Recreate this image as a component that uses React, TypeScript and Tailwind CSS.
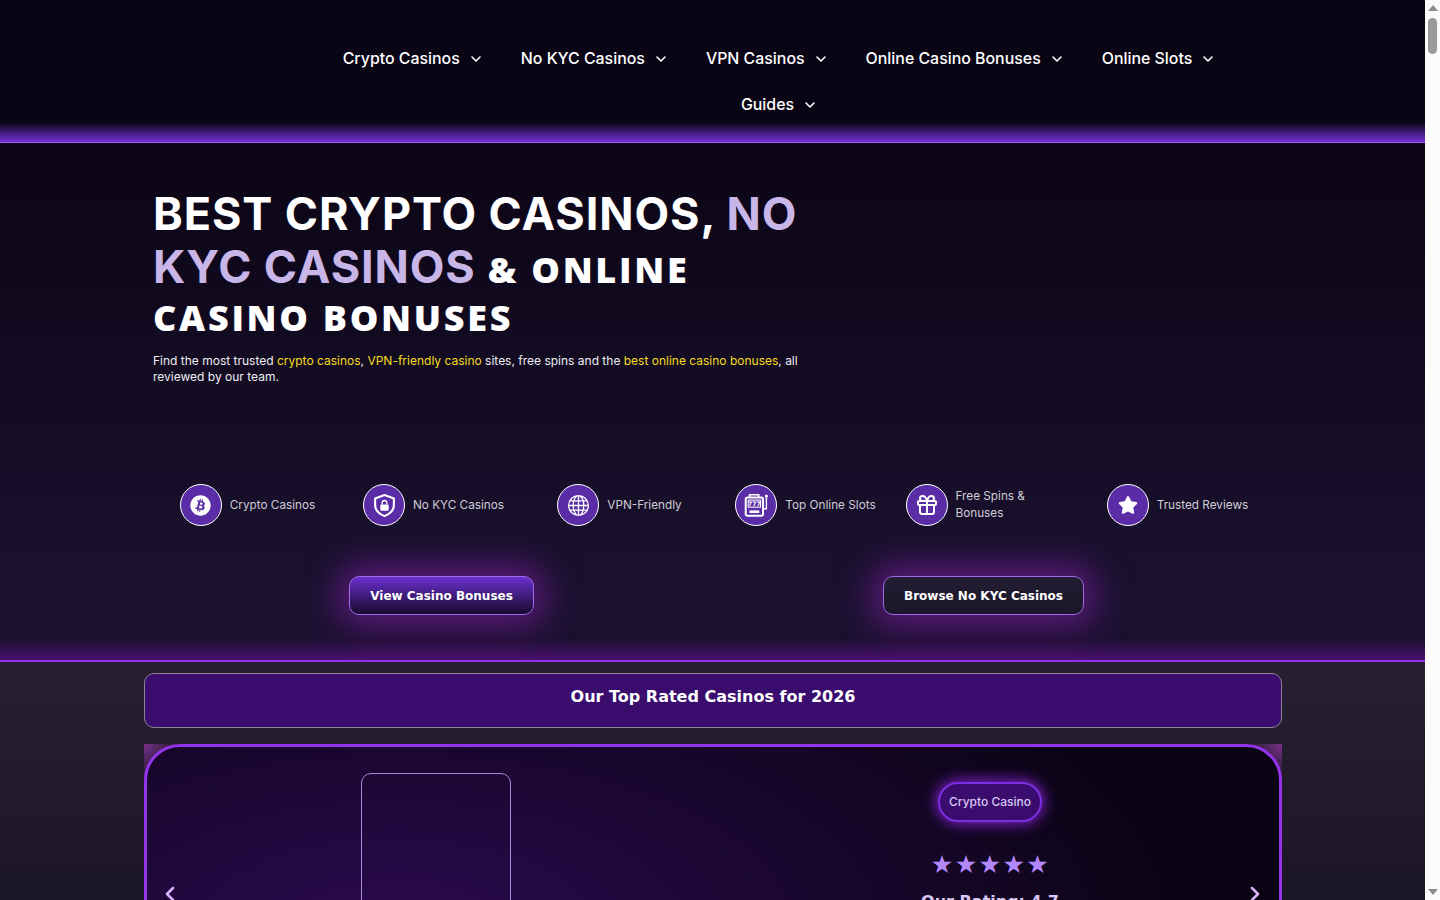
import React from "react";
import { FaBitcoin, FaStar } from "react-icons/fa";
import { BsGlobe } from "react-icons/bs";
import { ChevronDown, ChevronLeft, ChevronRight, Gift } from "lucide-react";

function ShieldLock() {
  return (
    <svg viewBox="0 0 24 24" className="h-[25px] w-[25px]" fill="none">
      <path d="M12 2 L21 5.2 V11.5 C21 16.5 17.2 20 12 22.2 C6.8 20 3 16.5 3 11.5 V5.2 Z" stroke="white" strokeWidth="2" strokeLinejoin="round" />
      <rect x="8" y="11" width="8" height="6" rx="1" fill="white" />
      <path d="M9.8 11 V9.4 A2.2 2.2 0 0 1 14.2 9.4 V11" stroke="white" strokeWidth="1.3" />
    </svg>
  );
}

function Slot() {
  return (
    <svg viewBox="0 0 24 24" className="h-[26px] w-[26px]" fill="none" stroke="white">
      <path d="M6 5 V2.5 H14.5 V5" strokeWidth="1.5" />
      <rect x="2.5" y="5" width="16" height="17" rx="1.5" strokeWidth="1.8" />
      <rect x="4.8" y="7.5" width="11.4" height="6.5" strokeWidth="1" />
      <text x="10.5" y="13" textAnchor="middle" fontSize="5.6" fontWeight="700" fontFamily="'DejaVu Sans', sans-serif" fill="white" stroke="none">777</text>
      <rect x="6" y="17" width="9" height="2.4" fill="white" strokeWidth="0" />
      <path d="M19 15.5 H21.6 V5" strokeWidth="1.3" />
      <circle cx="21.6" cy="3.8" r="1.5" fill="white" strokeWidth="0" />
    </svg>
  );
}

function Triangle({ up }: { up?: boolean }) {
  return (
    <svg viewBox="0 0 10 6" className="h-[6px] w-[10px]" fill="#8c8c8c">
      <path d={up ? "M5 0 L10 6 H0 Z" : "M0 0 H10 L5 6 Z"} />
    </svg>
  );
}

const navItems = ["Crypto Casinos", "No KYC Casinos", "VPN Casinos", "Online Casino Bonuses", "Online Slots", "Guides"];

const features = [
  { label: "Crypto Casinos", icon: <FaBitcoin className="text-[21px] text-white" /> },
  { label: "No KYC Casinos", icon: <ShieldLock /> },
  { label: "VPN-Friendly", icon: <BsGlobe className="text-[21px] text-white" /> },
  { label: "Top Online Slots", icon: <Slot /> },
  { label: "Free Spins & Bonuses", icon: <Gift className="h-[24px] w-[24px] text-white" strokeWidth={2} />, wrap: true },
  { label: "Trusted Reviews", icon: <FaStar className="text-[20px] text-white" /> },
];

export default function App() {
  return (
    <div className="flex h-screen overflow-hidden bg-white">
      <main className="w-[1425px] shrink-0 bg-[#1a1424] font-['Inter',sans-serif] text-white">
        <header className="flex h-[143px] justify-end border-b border-b-[#9a5cf0] bg-[linear-gradient(180deg,#0a0514_0,#0a0514_122px,#6d2fd0_141px)] pr-[167px] pt-[36px]">
          <nav className="flex w-[960px] flex-wrap content-start justify-center">
            {navItems.map((n) => (
              <a key={n} className="flex h-[46px] items-center gap-[8px] pl-[20px] pr-[17px] text-[15.9px] font-medium text-white">
                <span>{n}</span>
                <ChevronDown className="h-[16px] w-[16px]" strokeWidth={2.4} />
              </a>
            ))}
          </nav>
        </header>

        <section className="h-[519px] border-b-2 border-b-[#9333ea] bg-[linear-gradient(180deg,#0b0515_0,#1b1230_90%,#1c1030_96%,#4a1170_100%)]">
          <div className="ml-[153px] w-[660px] pt-[45px]">
            <h1 className="font-['Open_Sans',sans-serif] text-[36px] font-extrabold leading-[48px] tracking-[2.7px]">
              <span className="font-['Inter',sans-serif] text-[45px] font-bold leading-[52px] tracking-[0.9px]">
                BEST CRYPTO CASINOS, <span className="text-[#c8b6e8]">NO KYC CASINOS</span>
              </span>{" "}
              &amp; ONLINE CASINO BONUSES
            </h1>
            <p className="mt-[11px] text-[12px] leading-[16px] text-[#eeeef2]">
              Find the most trusted <span className="text-[#f5dc1e]">crypto casinos</span>,{" "}
              <span className="text-[#f5dc1e]">VPN-friendly casino</span> sites, free spins and the{" "}
              <span className="text-[#f5dc1e]">best online casino bonuses</span>, all reviewed by our team.
            </p>
          </div>

          <div className="mx-auto mt-[99px] grid w-[1116px] grid-cols-6">
            {features.map((f) => (
              <div key={f.label} className="flex justify-center">
                <div className="flex items-center gap-[8px]">
                  <div className="flex h-[42px] w-[42px] shrink-0 items-center justify-center rounded-full border border-white bg-[#5a2ca6]">
                    {f.icon}
                  </div>
                  <span className={`text-[11.75px] leading-[17px] text-[#cfcdd6] ${f.wrap ? "w-[122px]" : ""}`}>
                    {f.wrap ? (
                      <>
                        Free Spins &amp;
                        <br />
                        Bonuses
                      </>
                    ) : (
                      f.label
                    )}
                  </span>
                </div>
              </div>
            ))}
          </div>

          <div className="mx-auto mt-[50px] grid w-[1084px] grid-cols-2">
            <div className="flex justify-center">
              <a className="flex h-[39px] items-center rounded-[10px] border border-[#a06ae8] bg-[linear-gradient(180deg,#6a2fcf,#170a2c)] px-[20px] font-['DejaVu_Sans',sans-serif] text-[12px] font-bold shadow-[0_0_34px_10px_#5f1a80]">
                View Casino Bonuses
              </a>
            </div>
            <div className="flex justify-center">
              <a className="flex h-[39px] items-center rounded-[10px] border border-[#a06ae8] bg-[linear-gradient(180deg,#241e34,#1a1528)] px-[20px] font-['DejaVu_Sans',sans-serif] text-[12px] font-bold shadow-[0_0_34px_10px_#5f1a80]">
                Browse No KYC Casinos
              </a>
            </div>
          </div>
        </section>

        <section className="bg-[linear-gradient(180deg,#282032_0,#1b1626_240px)] pb-[40px] pt-[11px]">
          <div className="ml-[144px] flex h-[55px] w-[1138px] justify-center rounded-[10px] border border-[#8a8494] bg-[#3a0c6e] pt-[11px] font-['DejaVu_Sans',sans-serif] text-[16px] font-bold">
            Our Top Rated Casinos for 2026
          </div>

          <div className="ml-[144px] mt-[16px] w-[1138px] bg-[radial-gradient(circle_at_0_0,#7a2f8a,transparent_32px),radial-gradient(circle_at_100%_0,#7a2f8a,transparent_32px)]">
            <div className="relative h-[480px] rounded-[36px] border-[3px] border-[#9333ea] bg-[radial-gradient(ellipse_800px_350px_at_250px_180px,#2a0a4e,#0b0414)]">
              <ChevronLeft className="absolute left-[11px] top-[135px] h-[24px] w-[24px] text-[#d8b4fe]" strokeWidth={2.5} />
              <ChevronRight className="absolute right-[12px] top-[135px] h-[24px] w-[24px] text-[#d8b4fe]" strokeWidth={2.5} />
              <div className="grid grid-cols-2 px-[12px] pt-[26px]">
                <div className="flex justify-center">
                  <div className="h-[200px] w-[150px] rounded-[10px] border border-[#a78bda]" />
                </div>
                <div className="flex flex-col items-center pt-[9px]">
                  <div className="flex h-[40px] items-center rounded-full border-2 border-[#7c2fe0] bg-[#3a0c6e] px-[9px] text-[12px] font-medium text-[#d8c8f5] shadow-[0_0_14px_2px_#7e22ce]">
                    Crypto Casino
                  </div>
                  <div className="mt-[27px] pl-[1px] font-['DejaVu_Sans',sans-serif] text-[25px] leading-[32px] tracking-[1.5px] text-[#b388ff]">★★★★★</div>
                  <div className="mt-[9px] font-['DejaVu_Sans',sans-serif] text-[16px] font-bold text-[#d8c8f5]">Our Rating: 4.7</div>
                </div>
              </div>
            </div>
          </div>
        </section>
      </main>

      <div className="flex w-[15px] shrink-0 flex-col items-center bg-[#fbfbfb] pb-[5px] pt-[5px]">
        <Triangle up />
        <div className="mt-[7px] h-[36px] w-[9px] rounded-full bg-[#9a9a9a]" />
        <div className="mt-auto">
          <Triangle />
        </div>
      </div>
    </div>
  );
}
